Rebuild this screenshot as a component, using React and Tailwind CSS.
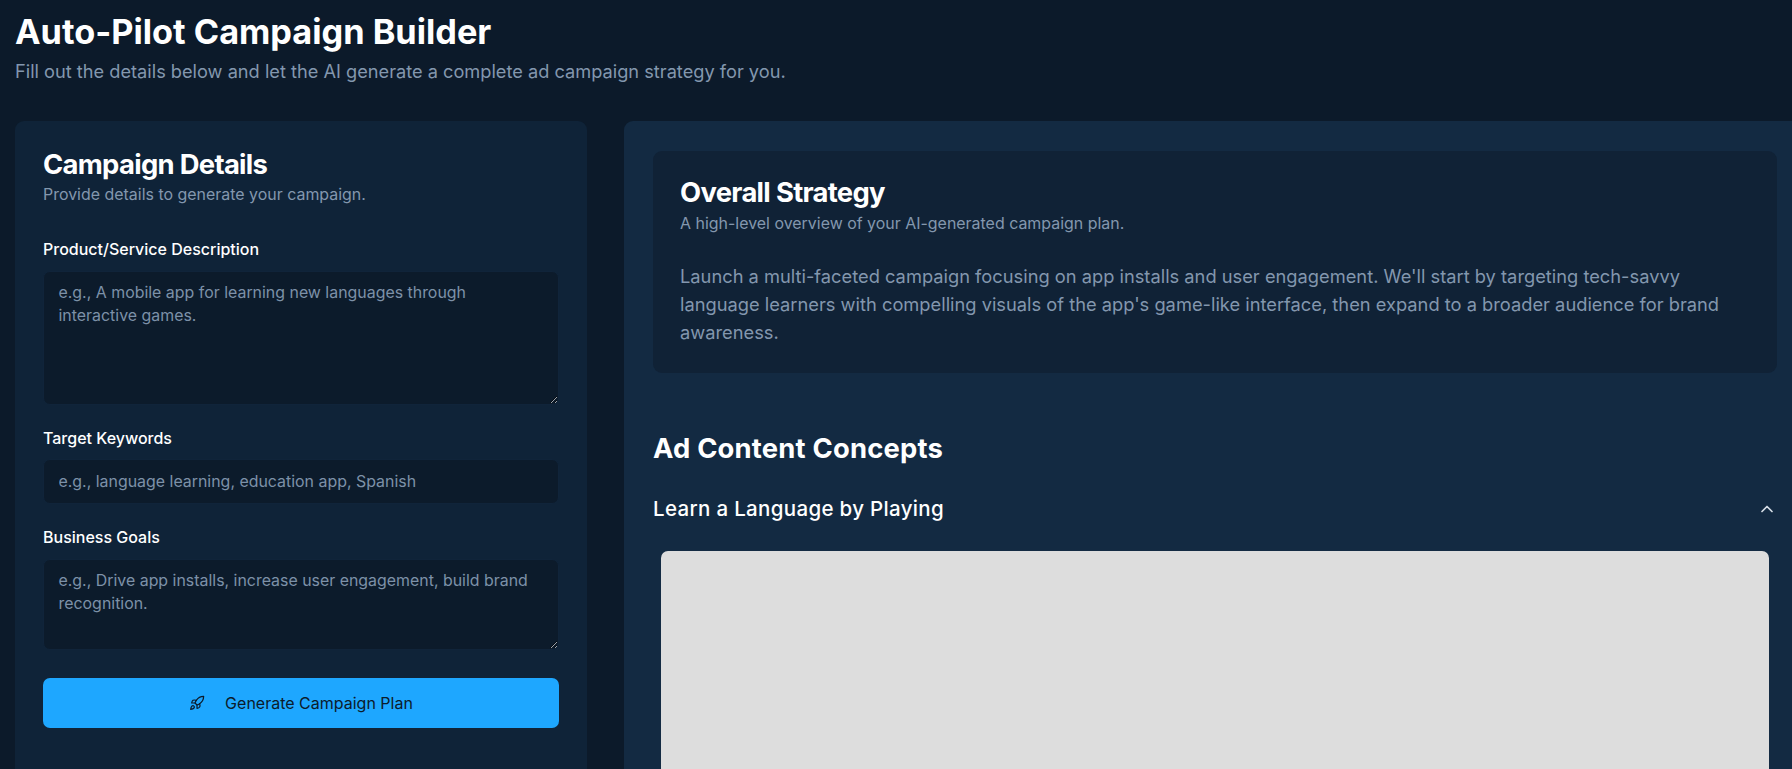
import { ChevronUp, Rocket } from 'lucide-react';

const fieldClass =
  'w-full rounded-[7px] border border-[#10243a] bg-[#0c1b2b] px-[14.5px] text-[15.92px] text-white placeholder:text-[#7d91a8] focus:outline-none';

function Field({ label, gap = 'gap-[10.5px]', children }) {
  return (
    <div className={`flex flex-col ${gap}`}>
      <label className="text-[16px] leading-[23px] font-medium text-white">{label}</label>
      {children}
    </div>
  );
}

function CampaignForm() {
  return (
    <section className="w-[572px] shrink-0 rounded-[9px] bg-[#0f2338] px-[28px] pt-[27px] pb-[60px]">
      <h2 className="text-[27.4px] leading-[32px] font-bold tracking-[-0.025em] text-white">Campaign Details</h2>
      <p className="mt-[3px] text-[15.95px] leading-[23px] text-[#8397ae]">Provide details to generate your campaign.</p>
      <div className="mt-[31.5px] flex flex-col gap-[21.5px]">
        <Field label="Product/Service Description">
          <textarea
            rows={5}
            className={`${fieldClass} h-[134px] pt-[9px] pb-[8px] leading-[23px]`}
            placeholder="e.g., A mobile app for learning new languages through interactive games."
          />
        </Field>
        <Field label="Target Keywords" gap="gap-[9.5px]">
          <input className={`${fieldClass} h-[45px]`} placeholder="e.g., language learning, education app, Spanish" />
        </Field>
        <Field label="Business Goals">
          <textarea
            rows={3}
            className={`${fieldClass} h-[91px] pt-[9px] pb-[8px] leading-[23px]`}
            placeholder="e.g., Drive app installs, increase user engagement, build brand recognition."
          />
        </Field>
      </div>
      <button className="mt-[27.5px] flex h-[50px] w-full items-center justify-center gap-[20px] rounded-[7px] bg-[#1ea7ff] text-[16px] text-[#0c1b2b]">
        <Rocket size={16} strokeWidth={1.8} />
        Generate Campaign Plan
      </button>
    </section>
  );
}

function ResultsPanel() {
  return (
    <section className="w-[1200px] shrink-0 rounded-[9px] bg-[#132a42] px-[29px] pt-[30px]">
      <div className="w-[1124px] rounded-[9px] bg-[#102236] px-[27px] pt-[25px] pb-[27px]">
        <h2 className="text-[27.4px] leading-[32px] font-bold tracking-[-0.025em] text-white">Overall Strategy</h2>
        <p className="mt-[4px] text-[15.95px] leading-[23px] text-[#8397ae]">A high-level overview of your AI-generated campaign plan.</p>
        <p className="mt-[27px] text-[18.3px] leading-[28px] text-[#8397ae]">
          Launch a multi-faceted campaign focusing on app installs and user engagement. We'll start by targeting tech-savvy language learners with compelling visuals of the app's game-like interface, then expand to a broader audience for brand awareness.
        </p>
      </div>
      <h2 className="mt-[57px] text-[27.4px] leading-[36px] font-bold tracking-[0.007em] text-white">Ad Content Concepts</h2>
      <div className="mt-[28.5px] flex w-[1124px] items-center justify-between">
        <h3 className="text-[20.5px] leading-[28px] font-medium tracking-[0.016em] text-white">Learn a Language by Playing</h3>
        <ChevronUp size={20} className="text-[#d5dde6]" />
      </div>
      <div className="mt-[28px] ml-[8px] h-[400px] w-[1108px] rounded-[7px] bg-[#dddddd]" />
    </section>
  );
}

export default function App() {
  return (
    <div className="h-screen overflow-hidden bg-[#0c1a2a] px-[15px] pt-[12px] font-['Inter',sans-serif]">
      <h1 className="text-[34.3px] leading-[40px] font-bold text-white">Auto-Pilot Campaign Builder</h1>
      <p className="mt-[7px] text-[18.22px] leading-[24px] text-[#8397ae]">
        Fill out the details below and let the AI generate a complete ad campaign strategy for you.
      </p>
      <div className="mt-[38px] flex items-start gap-[37px]">
        <CampaignForm />
        <ResultsPanel />
      </div>
    </div>
  );
}
